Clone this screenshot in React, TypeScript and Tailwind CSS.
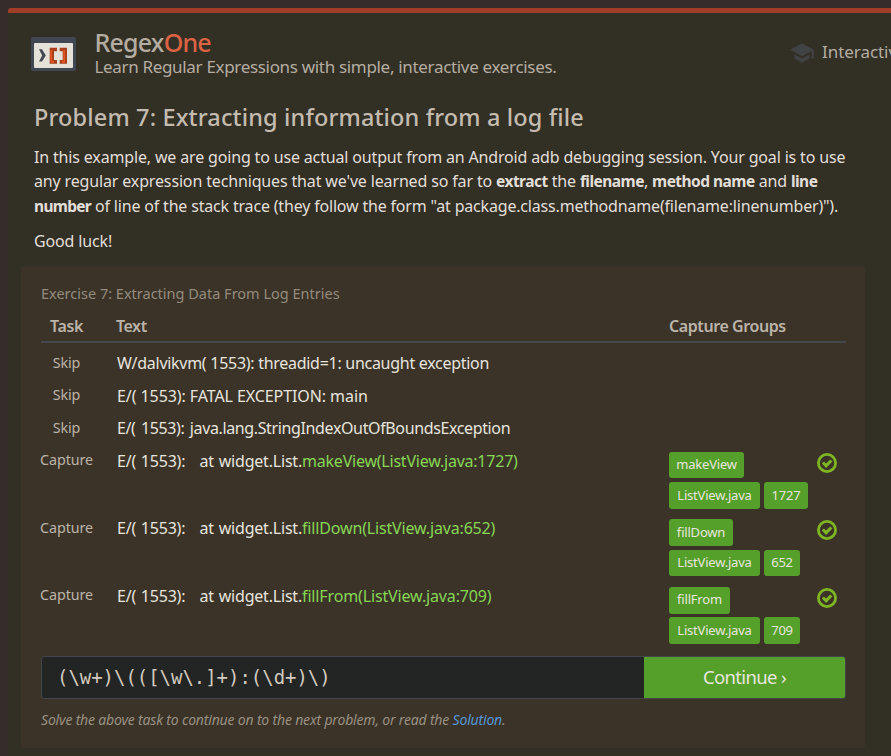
import React from "react";

type Entry = {
  task: string;
  text: string;
  textClass: string;
  match?: string;
  matchClass?: string;
  groups?: { label: string; box: string }[][];
};

const entries: Entry[] = [
  { task: "Skip", text: "W/dalvikvm( 1553): threadid=1: uncaught exception", textClass: "tracking-[-0.28px]" },
  { task: "Skip", text: "E/( 1553): FATAL EXCEPTION: main", textClass: "tracking-[-0.08px]" },
  { task: "Skip", text: "E/( 1553): java.lang.StringIndexOutOfBoundsException", textClass: "tracking-[-0.37px] [word-spacing:1.6px]" },
  {
    task: "Capture",
    text: "E/( 1553):   at widget.List.",
    textClass: "tracking-[-0.2px] [word-spacing:0.8px]",
    match: "makeView(ListView.java:1727)",
    matchClass: "tracking-[-0.22px]",
    groups: [[{ label: "makeView", box: "w-[75px]" }], [{ label: "ListView.java", box: "w-[91px]" }, { label: "1727", box: "w-[44px]" }]],
  },
  {
    task: "Capture",
    text: "E/( 1553):   at widget.List.",
    textClass: "tracking-[-0.2px] [word-spacing:0.8px]",
    match: "fillDown(ListView.java:652)",
    matchClass: "tracking-[-0.16px]",
    groups: [[{ label: "fillDown", box: "w-[64px]" }], [{ label: "ListView.java", box: "w-[91px]" }, { label: "652", box: "w-[36px]" }]],
  },
  {
    task: "Capture",
    text: "E/( 1553):   at widget.List.",
    textClass: "tracking-[-0.2px] [word-spacing:0.8px]",
    match: "fillFrom(ListView.java:709)",
    matchClass: "tracking-[-0.14px]",
    groups: [[{ label: "fillFrom", box: "w-[61px]" }], [{ label: "ListView.java", box: "w-[91px]" }, { label: "709", box: "w-[36px]" }]],
  },
];

function Logo() {
  return (
    <svg className="block h-[34px] w-[45px]" viewBox="0 0 45 34">
      <rect width="45" height="34" rx="2" fill="#414653" />
      <rect x="3" y="6" width="39" height="25" rx="1" fill="#e4e1d9" />
      <path d="M8 12.3h3l3.8 6.2-3.8 6H8l3.2-6z" fill="#414653" />
      <path d="M18.7 10.7h7.3v3.6h-3v8.8h3v3.6h-7.3zM36 10.7h-7.3v3.6h3v8.8h-3v3.6H36z" fill="#a8401c" />
      <path d="M20.2 13v11.5M23 24.9h-3M33.2 13v11.5M31 24.9h3" stroke="#e4561f" strokeWidth="1.8" />
    </svg>
  );
}

function GraduationCap() {
  return (
    <svg className="mt-px block size-[26px]" viewBox="0 0 24 24" fill="#414243">
      <path d="M5 13.18v4L12 21l7-3.82v-4L12 17l-7-3.82zM12 3L1 9l11 6 9-4.91V17h2V9L12 3z" />
    </svg>
  );
}

function CheckMark() {
  return (
    <svg className="block size-5" viewBox="0 0 20 20" fill="none" stroke="#7fb522">
      <circle cx="10" cy="10" r="8.6" strokeWidth="2.8" />
      <path d="M5.9 9.5l3.2 3.2 5.2-5.2" strokeWidth="3.1" />
    </svg>
  );
}

function Strong({ children }: { children: string }) {
  return <b className="text-[15.5px] leading-none tracking-[-0.53px]">{children}</b>;
}

function LogRow({ entry }: { entry: Entry }) {
  return (
    <div className={"flex w-full " + (entry.groups ? "h-[67.6px]" : "h-[32.5px]")}>
      <div className="flex w-[51px] shrink-0 justify-center pt-[9.8px] text-[14.3px] leading-5 tracking-[-0.1px] text-[#bcb4a9]">{entry.task}</div>
      <div className="w-[577px] shrink-0 whitespace-pre pt-[8.4px] pl-[25px] text-[16px] leading-6 text-[#e8e5df]">
        <span className={entry.textClass}>{entry.text}</span>
        {entry.match && <span className={"text-[#87d755] " + entry.matchClass}>{entry.match}</span>}
      </div>
      {entry.groups && (
        <>
          <div className="flex w-[148px] shrink-0 flex-col gap-[3.7px] pt-[11.2px]">
            {entry.groups.map((line, i) => (
              <div key={i} className="flex gap-1">
                {line.map((g) => (
                  <span key={g.label} className={"flex h-[26.7px] items-center justify-center rounded-[3px] bg-[#55a02a] text-[13px] tracking-[-0.2px] text-[#e8e6df] " + g.box}>
                    {g.label}
                  </span>
                ))}
              </div>
            ))}
          </div>
          <div className="pt-[12.2px]">
            <CheckMark />
          </div>
        </>
      )}
    </div>
  );
}

export default function App() {
  return (
    <div className="h-[756px] w-[891px] overflow-hidden bg-[#372c2c] pt-2 pl-2 font-['Noto_Sans',sans-serif] whitespace-nowrap">
      <div className="h-[748px] rounded-tl-[3px] border-t-[5px] border-[#a13d28] bg-[#322f25]">
        <header className="flex h-[83px] pl-[23px]">
          <div className="pt-6">
            <Logo />
          </div>
          <div className="w-[693px] shrink-0 pt-[15px] pl-[18.4px] text-[#b5ada1]">
            <div className="h-[29px] text-[25px] leading-[29px] font-medium tracking-[-0.77px]">
              Regex<span className="text-[#dd6243]">One</span>
            </div>
            <div className="text-[17px] leading-5 tracking-[-0.32px]">Learn Regular Expressions with simple, interactive exercises.</div>
          </div>
          <div className="flex gap-[7px] pt-[26px] pl-5 text-[17px] text-[#b5ada1]">
            <GraduationCap />
            <span className="pt-px leading-6 tracking-[-0.05px]">Interactive Tutorial</span>
          </div>
        </header>

        <main className="pl-[26px]">
          <h1 className="h-[49px] pt-[3px] text-[23.5px] leading-9 font-medium tracking-[0.14px] text-[#c4bcb0]">Problem 7: Extracting information from a log file</h1>
          <div className="text-[16px] leading-[24.4px] text-[#e2dfd8]">
            <p className="tracking-[-0.16px]">In this example, we are going to use actual output from an Android adb debugging session. Your goal is to use</p>
            <p className="h-[24.4px] tracking-[-0.15px]">
              any regular expression techniques that we've learned so far to <Strong>extract</Strong> the <Strong>filename</Strong>, <Strong>method name</Strong> and <Strong>line</Strong>
            </p>
            <p className="h-[24.4px] tracking-[-0.18px]">
              <b className="text-[15.5px] leading-none tracking-[-0.7px]">number</b> of line of the stack trace (they follow the form "at package.class.methodname(filename:linenumber)").
            </p>
            <p className="mt-[10.4px] tracking-[-0.15px]">Good luck!</p>
          </div>
        </main>

        <section className="mt-[13px] ml-[13px] h-[482px] w-[844px] rounded-[3px] bg-[#3b3328] px-5 pt-4">
          <div className="h-[33px] text-[14.5px] leading-[22px] text-[#948b7e]">Exercise 7: Extracting Data From Log Entries</div>
          <div className="flex h-7 w-[805px] border-b-2 border-[#45484b] text-[16px] leading-[22px] font-semibold text-[#bcb4a9]">
            <div className="w-[51px] text-center tracking-[-0.4px]">Task</div>
            <div className="w-[577px] pl-[24px] tracking-[-0.45px]">Text</div>
            <div className="tracking-[-0.42px]">Capture Groups</div>
          </div>
          <div className="h-[313px] w-[805px]">
            {entries.map((e, i) => (
              <LogRow key={i} entry={e} />
            ))}
          </div>
          <div className="flex h-[43px] w-[805px] overflow-hidden rounded-[3px] border border-[#43474b] bg-[#232525]">
            <div className="w-[602px] pl-[15px] font-['DejaVu_Sans_Mono',monospace] text-[18.95px] leading-[41px] text-[#d2cabe]">{"(\\w+)\\(([\\w\\.]+):(\\d+)\\)"}</div>
            <div className="w-[201px] bg-[#55a02a] text-center text-[18.5px] leading-[40px] tracking-[-0.65px] text-[#e8e6df]">Continue ›</div>
          </div>
          <p className="pt-[11px] text-[14px] leading-5 tracking-[-0.18px] text-[#999082] italic">
            Solve the above task to continue on to the next problem, or read the <span className="text-[#5596d8]">Solution</span>.
          </p>
        </section>
      </div>
    </div>
  );
}
